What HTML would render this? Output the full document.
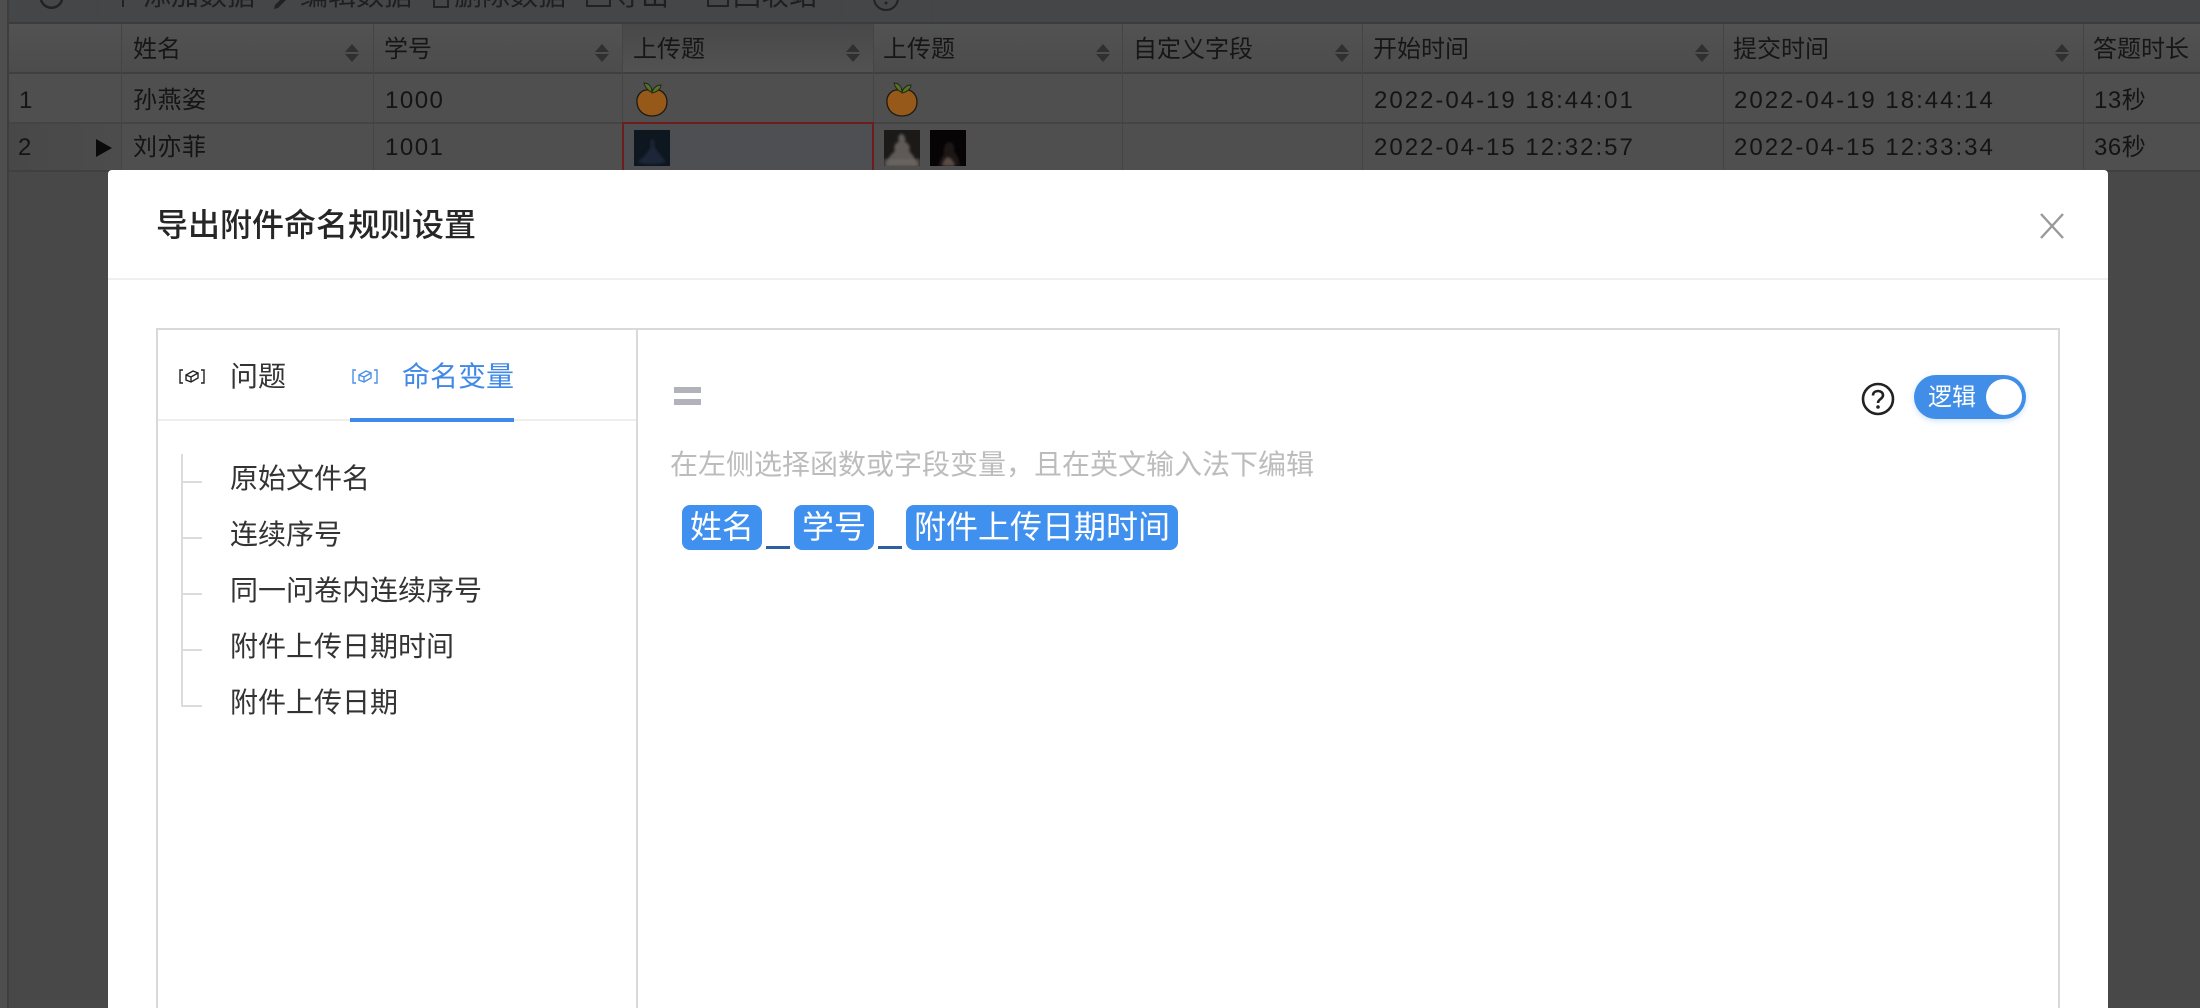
<!DOCTYPE html>
<html lang="zh"><head><meta charset="utf-8"><title>导出附件命名规则设置</title>
<style>
*{box-sizing:border-box}
html,body{margin:0;padding:0;width:2200px;height:1008px;overflow:hidden}
body{background:#484848;font-family:"Liberation Sans","Noto Sans CJK SC",sans-serif}
#w{position:relative;width:2200px;height:1008px;overflow:hidden;background:#484848;contain:strict}
.a{position:absolute}
.t{position:absolute;white-space:nowrap}
.tb{font-size:28px;line-height:28px;color:#1f1f1f;top:-18px}
.th{font-size:24px;line-height:30px;color:#161616;top:35px}
.td{font-size:24px;line-height:30px;color:#141414;letter-spacing:.5px}
.n{letter-spacing:1.5px}
.d{letter-spacing:2px}
.r1{top:86px}.r2{top:133px}
.v{position:absolute;width:1px;background:#444}
.up{position:absolute;top:44px;width:0;height:0;border-left:7px solid transparent;border-right:7px solid transparent;border-bottom:8px solid #303030}
.dn{position:absolute;top:54px;width:0;height:0;border-left:7px solid transparent;border-right:7px solid transparent;border-top:8px solid #303030}
.it{font-size:28px;line-height:36px;color:#333;left:230px}
.tag{position:absolute;top:505px;height:45px;background:#4090f0;border-radius:8px;color:#fff;font-size:32px;line-height:45px;text-align:center;white-space:nowrap}
.us{position:absolute;top:546px;width:24px;height:3px;background:#2f5f9e}
.tick{position:absolute;left:181px;width:21px;height:2px;background:#dcdcdc}
</style></head><body><div id="w">
<!-- toolbar -->
<div class="a" style="left:0;top:0;width:2200px;height:23px;background:#454648"></div>
<div class="a" style="left:0;top:22px;width:2200px;height:2px;background:#3c3c3c"></div>
<div class="a" style="left:0;top:0;width:7px;height:1008px;background:#4e4e4e"></div>
<div class="a" style="left:7px;top:0;width:2px;height:1008px;background:#3e3e3e"></div>
<div class="a" style="left:9px;top:172px;width:2191px;height:836px;background:#484848"></div>
<svg class="a" style="left:30px;top:0" width="44" height="10"><path d="M11 -4A11 11 0 0 0 32 -4" fill="none" stroke="#222" stroke-width="2.5" transform="translate(0,4)"/></svg>
<div class="v" style="left:97px;top:0;height:22px"></div>
<div class="a" style="left:122px;top:0;width:2px;height:7px;background:#222"></div>
<div class="t tb" style="left:143px">添加数据</div>
<svg class="a" style="left:270px;top:0" width="20" height="10"><path d="M4 9L5 5 11 -1 16 0 8 8Z" fill="#222"/></svg>
<div class="t tb" style="left:300px">编辑数据</div>
<div class="a" style="left:433px;top:-4px;width:16px;height:12px;border:2px solid #222"></div>
<div class="t tb" style="left:454px">删除数据</div>
<div class="a" style="left:586px;top:-4px;width:25px;height:11px;border:2px solid #222;border-top:0"></div>
<div class="t tb" style="left:613px">导出</div>
<div class="a" style="left:707px;top:-4px;width:22px;height:11px;border:2px solid #222;border-top:0"></div>
<div class="t tb" style="left:733px">回收站</div>
<div class="v" style="left:841px;top:0;height:22px"></div>
<svg class="a" style="left:870px;top:0" width="32" height="12"><circle cx="16" cy="-2" r="12" fill="none" stroke="#222" stroke-width="2"/><circle cx="16" cy="3" r="1.5" fill="#222"/></svg>
<div class="v" style="left:931px;top:0;height:22px"></div>

<!-- table -->
<div class="a" style="left:9px;top:24px;width:2191px;height:48px;background:linear-gradient(#525252,#4c4c4c)"></div>
<div class="a" style="left:622px;top:24px;width:251px;height:48px;background:linear-gradient(#484848,#525252)"></div>
<div class="a" style="left:9px;top:72px;width:2191px;height:2px;background:#3f3f3f"></div>
<div class="a" style="left:9px;top:74px;width:2191px;height:48px;background:#4f4f4f"></div>
<div class="a" style="left:9px;top:122px;width:2191px;height:2px;background:#444"></div>
<div class="a" style="left:9px;top:124px;width:2191px;height:46px;background:#4f4f4f"></div>
<div class="a" style="left:9px;top:124px;width:112px;height:46px;background:linear-gradient(90deg,#484848,#4c4c4c)"></div>
<div class="a" style="left:9px;top:170px;width:2191px;height:2px;background:#404040"></div>
<div class="v" style="left:121px;top:24px;height:146px"></div>
<div class="v" style="left:373px;top:24px;height:146px"></div>
<div class="v" style="left:622px;top:24px;height:146px"></div>
<div class="v" style="left:873px;top:24px;height:146px"></div>
<div class="v" style="left:1122px;top:24px;height:146px"></div>
<div class="v" style="left:1362px;top:24px;height:146px"></div>
<div class="v" style="left:1723px;top:24px;height:146px"></div>
<div class="v" style="left:2083px;top:24px;height:146px"></div>

<div class="t th" style="left:133px">姓名</div>
<div class="t th" style="left:384px">学号</div>
<div class="t th" style="left:633px">上传题</div>
<div class="t th" style="left:883px">上传题</div>
<div class="t th" style="left:1133px">自定义字段</div>
<div class="t th" style="left:1373px">开始时间</div>
<div class="t th" style="left:1733px">提交时间</div>
<div class="t th" style="left:2093px">答题时长</div>
<i class="up" style="left:345px"></i><i class="dn" style="left:345px"></i>
<i class="up" style="left:595px"></i><i class="dn" style="left:595px"></i>
<i class="up" style="left:846px"></i><i class="dn" style="left:846px"></i>
<i class="up" style="left:1096px"></i><i class="dn" style="left:1096px"></i>
<i class="up" style="left:1335px"></i><i class="dn" style="left:1335px"></i>
<i class="up" style="left:1695px"></i><i class="dn" style="left:1695px"></i>
<i class="up" style="left:2055px"></i><i class="dn" style="left:2055px"></i>

<div class="t td r1" style="left:19px">1</div>
<div class="t td r1" style="left:133px">孙燕姿</div>
<div class="t td n r1" style="left:385px">1000</div>
<div class="t td d r1" style="left:1374px">2022-04-19 18:44:01</div>
<div class="t td d r1" style="left:1734px">2022-04-19 18:44:14</div>
<div class="t td r1" style="left:2094px">13秒</div>
<div class="t td r2" style="left:18px">2</div>
<div class="a" style="left:96px;top:139px;width:0;height:0;border-left:16px solid #0a0a0a;border-top:9px solid transparent;border-bottom:9px solid transparent"></div>
<div class="t td r2" style="left:133px">刘亦菲</div>
<div class="t td n r2" style="left:385px">1001</div>
<div class="t td d r2" style="left:1374px">2022-04-15 12:32:57</div>
<div class="t td d r2" style="left:1734px">2022-04-15 12:33:34</div>
<div class="t td r2" style="left:2094px">36秒</div>

<!-- oranges -->
<svg class="a" style="left:634px;top:82px" width="36" height="36" viewBox="0 0 36 36"><path d="M15 8C8 7 2 13 3 21 4 30 11 34 18 34 26 34 33 29 33 20 33 12 27 7 21 8Z" fill="#96591a" stroke="#1c1a14" stroke-width="1.3"/><path d="M17 10C13 8 11 5 10 1 15 1 18 5 18 10Z" fill="#56722a" stroke="#1c2410" stroke-width=".9"/><path d="M18 10C20 5 23 3 27 3 27 7 23 10 18 11Z" fill="#56722a" stroke="#1c2410" stroke-width=".9"/></svg>
<svg class="a" style="left:884px;top:82px" width="36" height="36" viewBox="0 0 36 36"><path d="M15 8C8 7 2 13 3 21 4 30 11 34 18 34 26 34 33 29 33 20 33 12 27 7 21 8Z" fill="#96591a" stroke="#1c1a14" stroke-width="1.3"/><path d="M17 10C13 8 11 5 10 1 15 1 18 5 18 10Z" fill="#56722a" stroke="#1c2410" stroke-width=".9"/><path d="M18 10C20 5 23 3 27 3 27 7 23 10 18 11Z" fill="#56722a" stroke="#1c2410" stroke-width=".9"/></svg>

<!-- selected cell -->
<div class="a" style="left:622px;top:122px;width:252px;height:48px;background:#4d4f53;border:2px solid #6e1d1d;border-bottom:0"></div>
<svg class="a" style="left:634px;top:130px" width="36" height="36" viewBox="0 0 36 36"><defs><filter id="b" x="-20%" y="-20%" width="140%" height="140%"><feGaussianBlur stdDeviation="1.3"/></filter><clipPath id="c"><rect width="36" height="36"/></clipPath></defs><rect width="36" height="36" fill="#0e1620"/><g clip-path="url(#c)"><path filter="url(#b)" d="M18 9C20 9 21 12 20 16 24 23 30 29 32 32 22 35 10 35 3 32 9 28 15 22 17 16 16 13 16 10 18 9Z" fill="#1a2739"/></g></svg>
<svg class="a" style="left:884px;top:130px" width="36" height="36" viewBox="0 0 36 36"><rect width="36" height="36" fill="#1c1a18"/><g clip-path="url(#c)"><path filter="url(#b)" d="M17 4C21 4 22 9 21 12 25 13 27 18 25 21 30 26 33 32 34 36H2C3 29 7 24 11 21 9 16 12 12 15 12 14 9 14 5 17 4Z" fill="#5e5a56"/><rect filter="url(#b)" x="0" y="29" width="36" height="8" fill="#6f6b67" opacity=".6"/></g></svg>
<svg class="a" style="left:930px;top:130px" width="36" height="36" viewBox="0 0 36 36"><rect width="36" height="36" fill="#060404"/><g clip-path="url(#c)"><path filter="url(#b)" d="M19 12C23 12 25 16 24 21 27 25 30 30 30 36H8C10 30 12 26 14 24 13 18 15 12 19 12Z" fill="#1e1612"/><path filter="url(#b)" d="M12 36C13 31 15 28 18 27 21 28 24 31 25 36Z" fill="#5a4c44"/></g></svg>

<!-- modal -->
<div class="a" style="left:108px;top:170px;width:2000px;height:838px;background:#fff;border-radius:4px 4px 0 0"></div>
<div class="a" style="left:108px;top:278px;width:2000px;height:2px;background:#efefef"></div>
<div class="t" style="left:156px;top:203px;font-size:32px;line-height:44px;color:#262626;font-weight:500">导出附件命名规则设置</div>
<svg class="a" style="left:2038px;top:211px" width="28" height="30"><path d="M3 3L25 27M25 3L3 27" stroke="#999" stroke-width="2.4" fill="none"/></svg>

<!-- panel -->
<div class="a" style="left:156px;top:328px;width:1904px;height:680px;border:2px solid #d9d9d9;border-bottom:0"></div>
<div class="a" style="left:636px;top:328px;width:2px;height:680px;background:#d9d9d9"></div>
<div class="a" style="left:158px;top:419px;width:478px;height:2px;background:#eeeeee"></div>
<div class="a" style="left:350px;top:418px;width:164px;height:4px;background:#4089e8"></div>
<svg class="a" style="left:179px;top:368px" width="26" height="17" viewBox="0 0 26 17" fill="none" stroke="#222" stroke-width="1.4"><path d="M4 2H1V15H4M22 2H25V15H22"/><path d="M7 7L14 3 19 5V10L12 14 7 12ZM7 7L12 9 19 5M12 9V14"/></svg>
<div class="t" style="left:230px;top:359px;font-size:28px;line-height:36px;color:#333">问题</div>
<svg class="a" style="left:352px;top:368px" width="26" height="17" viewBox="0 0 26 17" fill="none" stroke="#4b8fe8" stroke-width="1.4"><path d="M4 2H1V15H4M22 2H25V15H22"/><path d="M7 7L14 3 19 5V10L12 14 7 12ZM7 7L12 9 19 5M12 9V14"/></svg>
<div class="t" style="left:402px;top:359px;font-size:28px;line-height:36px;color:#4089e8">命名变量</div>

<div class="a" style="left:181px;top:454px;width:2px;height:252px;background:#dcdcdc"></div>
<div class="tick" style="top:481px"></div>
<div class="tick" style="top:537px"></div>
<div class="tick" style="top:593px"></div>
<div class="tick" style="top:649px"></div>
<div class="tick" style="top:705px"></div>
<div class="t it" style="top:461px">原始文件名</div>
<div class="t it" style="top:517px">连续序号</div>
<div class="t it" style="top:573px">同一问卷内连续序号</div>
<div class="t it" style="top:629px">附件上传日期时间</div>
<div class="t it" style="top:685px">附件上传日期</div>

<!-- editor -->
<div class="a" style="left:674px;top:387px;width:27px;height:6px;background:#b2b2ba"></div>
<div class="a" style="left:674px;top:399px;width:27px;height:6px;background:#b2b2ba"></div>
<div class="t" style="left:670px;top:447px;font-size:28px;line-height:36px;color:#bcbcbc">在左侧选择函数或字段变量，且在英文输入法下编辑</div>
<div class="tag" style="left:682px;width:80px">姓名</div>
<div class="us" style="left:766px"></div>
<div class="tag" style="left:794px;width:80px">学号</div>
<div class="us" style="left:878px"></div>
<div class="tag" style="left:906px;width:272px">附件上传日期时间</div>

<svg class="a" style="left:1860px;top:381px" width="36" height="36" viewBox="0 0 36 36"><circle cx="18" cy="18" r="15" fill="none" stroke="#222" stroke-width="2.6"/><path d="M13 14.5C13 11.5 15.3 10 18 10S23 11.6 23 14.2C23 18 18 18 18 22" fill="none" stroke="#222" stroke-width="2.6"/><circle cx="18" cy="26" r="1.8" fill="#222"/></svg>
<div class="a" style="left:1914px;top:375px;width:112px;height:44px;border-radius:22px;background:#408ee8;box-shadow:0 2px 6px rgba(64,142,232,.25)"></div>
<div class="t" style="left:1928px;top:382px;font-size:24px;line-height:32px;color:#fff">逻辑</div>
<div class="a" style="left:1986px;top:379px;width:36px;height:36px;border-radius:50%;background:#fff"></div>
</div></body></html>
